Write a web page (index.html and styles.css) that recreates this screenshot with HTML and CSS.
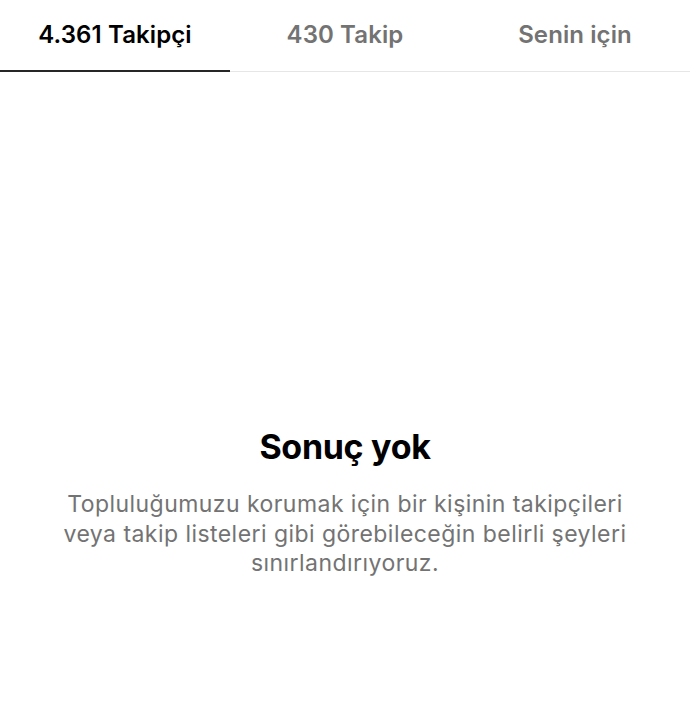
FILE: index.html
```html
<!DOCTYPE html>
<html lang="tr">
<head>
<meta charset="utf-8">
<link rel="stylesheet" href="styles.css">
</head>
<body>
<div class="page">
  <nav class="tabs">
    <div class="tab active">4.361 Takipçi</div>
    <div class="tab">430 Takip</div>
    <div class="tab">Senin için</div>
  </nav>
  <main class="empty">
    <h1 class="title">Sonuç yok</h1>
    <p class="desc">Topluluğumuzu korumak için bir kişinin takipçileri veya takip listeleri gibi görebileceğin belirli şeyleri sınırlandırıyoruz.</p>
  </main>
</div>
</body>
</html>
```
FILE: styles.css
```css
html, body {
  margin: 0;
  padding: 0;
  background: #fff;
}
body {
  font-family: Inter, "Noto Sans", "Liberation Sans", sans-serif;
  width: 690px;
  height: 726px;
  overflow: hidden;
}
.page {
  display: flex;
  flex-direction: column;
  height: 726px;
}
.tabs {
  display: grid;
  grid-template-columns: 230px 230px 230px;
  height: 72px;
  border-bottom: 1px solid #e6e6e6;
  box-sizing: border-box;
}
.tab {
  display: flex;
  align-items: center;
  justify-content: center;
  font-size: 24px;
  font-weight: 600;
  color: #737373;
  padding-bottom: 2px;
  letter-spacing: 0.1px;
}
.tab.active {
  color: #000;
  border-bottom: 2px solid #262626;
  margin-bottom: -1px;
}
.empty {
  display: flex;
  flex-direction: column;
  align-items: center;
  padding-top: 353px;
}
.title {
  margin: 0;
  font-size: 34px;
  font-weight: 700;
  color: #000;
  line-height: 44px;
  letter-spacing: -0.3px;
}
.desc {
  margin: 21px 0 0;
  width: 600px;
  text-align: center;
  font-size: 23px;
  line-height: 29.5px;
  color: #737373;
  font-weight: 400;
  letter-spacing: 0.45px;
}
```
